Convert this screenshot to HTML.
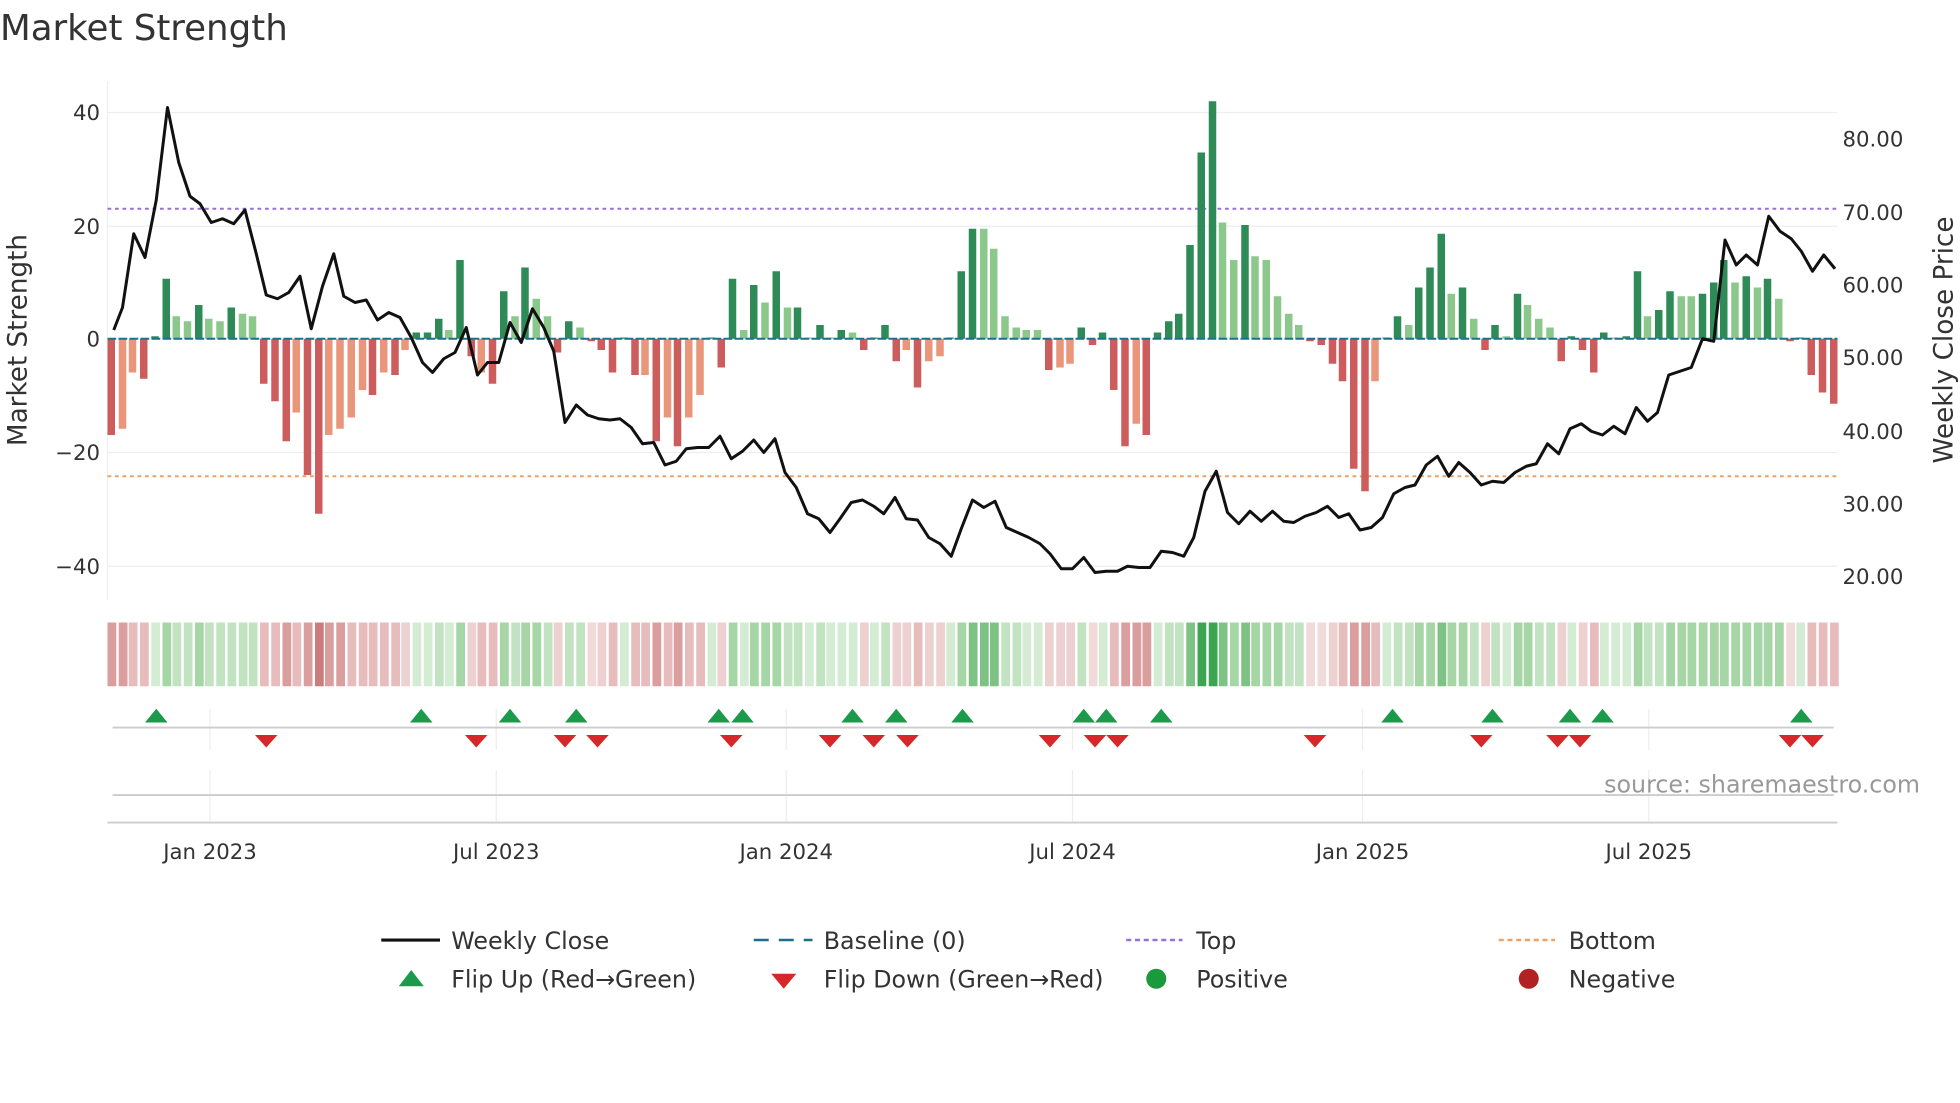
<!DOCTYPE html>
<html><head><meta charset="utf-8"><style>
html,body{margin:0;padding:0;background:#fff;overflow:hidden;}
#w{position:absolute;left:0;top:0;width:1568px;height:882px;transform:scale(1.25);transform-origin:0 0;}
svg{position:absolute;left:0;top:0;display:block;font-family:"DejaVu Sans","Liberation Sans",sans-serif;}
.bars{position:absolute;left:86px;top:71px;width:1384px;height:400px;display:flex;justify-content:space-between;}
.bars i{position:relative;width:6px;height:100%;display:block;}
.bars i::after{content:"";position:absolute;left:0;width:6px;height:calc(var(--v)*4.53px);}
.D::after,.L::after{bottom:200px;}
.R::after,.S::after{top:200px;}
.D::after{background:#2e8b57;}.L::after{background:#8cc88c;}
.R::after{background:#cd5c5c;}.S::after{background:#e9967a;}
.heat{position:absolute;left:86px;top:498px;width:1386px;height:51px;display:flex;justify-content:space-between;}
.heat i{display:block;width:7px;height:100%;}
.g1{background:#d4ecd4}.g2{background:#c2e3c2}.g3{background:#a6d6a6}.g4{background:#7fc285}.g5{background:#3da552}
.r1{background:#f0dada}.r2{background:#edd0d0}.r3{background:#e6bcbc}.r4{background:#db9e9e}.r5{background:#cc7c7c}
</style></head><body>
<div id="w">
<svg width="1568" height="882" viewBox="0 0 1568 882">
<rect width="1568" height="882" fill="#fff"/>
<g stroke="#eee" stroke-width="1">
<line x1="86" y1="90" x2="1470" y2="90"/><line x1="86" y1="181" x2="1470" y2="181"/>
<line x1="86" y1="362" x2="1470" y2="362"/><line x1="86" y1="453" x2="1470" y2="453"/>
<line x1="86" y1="65" x2="86" y2="480"/>
<line x1="168" y1="567" x2="168" y2="600"/><line x1="397" y1="567" x2="397" y2="600"/><line x1="629" y1="567" x2="629" y2="600"/><line x1="858" y1="567" x2="858" y2="600"/><line x1="1090" y1="567" x2="1090" y2="600"/><line x1="1319" y1="567" x2="1319" y2="600"/>
<line x1="168" y1="616" x2="168" y2="658"/><line x1="397" y1="616" x2="397" y2="658"/><line x1="629" y1="616" x2="629" y2="658"/><line x1="858" y1="616" x2="858" y2="658"/><line x1="1090" y1="616" x2="1090" y2="658"/><line x1="1319" y1="616" x2="1319" y2="658"/>
</g>
<line x1="86" y1="167" x2="1470" y2="167" stroke="#9b6fd9" stroke-width="1.6" stroke-dasharray="3,3"/>
<line x1="86" y1="381" x2="1470" y2="381" stroke="#f0a060" stroke-width="1.6" stroke-dasharray="3,3"/>
<g stroke="#ccc" stroke-width="1.5">
<line x1="90" y1="582" x2="1467" y2="582"/><line x1="90" y1="636" x2="1467" y2="636"/><line x1="86" y1="658" x2="1470" y2="658"/>
</g>
</svg>
<div class="bars">
<i class="R" style="--v:17"></i><i class="S" style="--v:16"></i><i class="S" style="--v:6"></i><i class="R" style="--v:7"></i><i class="D" style="--v:.5"></i><i class="D" style="--v:10.5"></i><i class="L" style="--v:4"></i><i class="L" style="--v:3"></i><i class="D" style="--v:6"></i><i class="L" style="--v:3.5"></i>
<i class="L" style="--v:3"></i><i class="D" style="--v:5.5"></i><i class="L" style="--v:4.5"></i><i class="L" style="--v:4"></i><i class="R" style="--v:8"></i><i class="R" style="--v:11"></i><i class="R" style="--v:18"></i><i class="S" style="--v:13"></i><i class="R" style="--v:24"></i><i class="R" style="--v:31"></i>
<i class="S" style="--v:17"></i><i class="S" style="--v:16"></i><i class="S" style="--v:14"></i><i class="S" style="--v:9"></i><i class="R" style="--v:10"></i><i class="S" style="--v:6"></i><i class="R" style="--v:6.5"></i><i class="S" style="--v:2"></i><i class="D" style="--v:1"></i><i class="D" style="--v:1"></i>
<i class="D" style="--v:3.5"></i><i class="L" style="--v:1.5"></i><i class="D" style="--v:14"></i><i class="R" style="--v:3"></i><i class="S" style="--v:6"></i><i class="R" style="--v:8"></i><i class="D" style="--v:8.5"></i><i class="L" style="--v:4"></i><i class="D" style="--v:12.5"></i><i class="L" style="--v:7"></i>
<i class="L" style="--v:4"></i><i class="R" style="--v:2.5"></i><i class="D" style="--v:3"></i><i class="L" style="--v:2"></i><i class="R" style="--v:.5"></i><i class="R" style="--v:2"></i><i class="R" style="--v:6"></i><i class="D" style="--v:.3"></i><i class="R" style="--v:6.5"></i><i class="S" style="--v:6.5"></i>
<i class="R" style="--v:18"></i><i class="S" style="--v:14"></i><i class="R" style="--v:19"></i><i class="S" style="--v:14"></i><i class="S" style="--v:10"></i><i class="D" style="--v:.3"></i><i class="R" style="--v:5"></i><i class="D" style="--v:10.5"></i><i class="L" style="--v:1.5"></i><i class="D" style="--v:9.5"></i>
<i class="L" style="--v:6.5"></i><i class="D" style="--v:12"></i><i class="L" style="--v:5.5"></i><i class="D" style="--v:5.5"></i><i class="L" style="--v:.3"></i><i class="D" style="--v:2.5"></i><i class="L" style="--v:.3"></i><i class="D" style="--v:1.5"></i><i class="L" style="--v:1"></i><i class="R" style="--v:2"></i>
<i class="D" style="--v:.3"></i><i class="D" style="--v:2.5"></i><i class="R" style="--v:4"></i><i class="S" style="--v:2"></i><i class="R" style="--v:8.5"></i><i class="S" style="--v:4"></i><i class="S" style="--v:3"></i><i class="D" style="--v:.3"></i><i class="D" style="--v:12"></i><i class="D" style="--v:19.5"></i>
<i class="L" style="--v:19.5"></i><i class="L" style="--v:16"></i><i class="L" style="--v:4"></i><i class="L" style="--v:2"></i><i class="L" style="--v:1.5"></i><i class="L" style="--v:1.5"></i><i class="R" style="--v:5.5"></i><i class="S" style="--v:5"></i><i class="S" style="--v:4.5"></i><i class="D" style="--v:2"></i>
<i class="R" style="--v:1"></i><i class="D" style="--v:1"></i><i class="R" style="--v:9"></i><i class="R" style="--v:19"></i><i class="S" style="--v:15"></i><i class="R" style="--v:17"></i><i class="D" style="--v:1"></i><i class="D" style="--v:3"></i><i class="D" style="--v:4.5"></i><i class="D" style="--v:16.5"></i>
<i class="D" style="--v:33"></i><i class="D" style="--v:42"></i><i class="L" style="--v:20.5"></i><i class="L" style="--v:14"></i><i class="D" style="--v:20"></i><i class="L" style="--v:14.5"></i><i class="L" style="--v:14"></i><i class="L" style="--v:7.5"></i><i class="L" style="--v:4.5"></i><i class="L" style="--v:2.5"></i>
<i class="R" style="--v:.5"></i><i class="R" style="--v:1"></i><i class="R" style="--v:4.5"></i><i class="R" style="--v:7.5"></i><i class="R" style="--v:23"></i><i class="R" style="--v:27"></i><i class="S" style="--v:7.5"></i><i class="D" style="--v:.3"></i><i class="D" style="--v:4"></i><i class="L" style="--v:2.5"></i>
<i class="D" style="--v:9"></i><i class="D" style="--v:12.5"></i><i class="D" style="--v:18.5"></i><i class="L" style="--v:8"></i><i class="D" style="--v:9"></i><i class="L" style="--v:3.5"></i><i class="R" style="--v:2"></i><i class="D" style="--v:2.5"></i><i class="L" style="--v:.5"></i><i class="D" style="--v:8"></i>
<i class="L" style="--v:6"></i><i class="L" style="--v:3.5"></i><i class="L" style="--v:2"></i><i class="R" style="--v:4"></i><i class="D" style="--v:.5"></i><i class="R" style="--v:2"></i><i class="R" style="--v:6"></i><i class="D" style="--v:1"></i><i class="L" style="--v:.3"></i><i class="D" style="--v:.5"></i>
<i class="D" style="--v:12"></i><i class="L" style="--v:4"></i><i class="D" style="--v:5"></i><i class="D" style="--v:8.5"></i><i class="L" style="--v:7.5"></i><i class="L" style="--v:7.5"></i><i class="D" style="--v:8"></i><i class="D" style="--v:10"></i><i class="D" style="--v:14"></i><i class="L" style="--v:10"></i>
<i class="D" style="--v:11"></i><i class="L" style="--v:9"></i><i class="D" style="--v:10.5"></i><i class="L" style="--v:7"></i><i class="R" style="--v:.5"></i><i class="D" style="--v:.3"></i><i class="R" style="--v:6.5"></i><i class="R" style="--v:9.5"></i><i class="R" style="--v:11.5"></i>
</div>
<div class="heat">
<i class="r4"></i><i class="r4"></i><i class="r3"></i><i class="r3"></i><i class="g1"></i><i class="g3"></i><i class="g2"></i><i class="g2"></i><i class="g3"></i><i class="g2"></i>
<i class="g2"></i><i class="g2"></i><i class="g2"></i><i class="g2"></i><i class="r3"></i><i class="r3"></i><i class="r4"></i><i class="r3"></i><i class="r4"></i><i class="r5"></i>
<i class="r4"></i><i class="r4"></i><i class="r3"></i><i class="r3"></i><i class="r3"></i><i class="r3"></i><i class="r3"></i><i class="r2"></i><i class="g1"></i><i class="g1"></i>
<i class="g2"></i><i class="g1"></i><i class="g3"></i><i class="r2"></i><i class="r3"></i><i class="r3"></i><i class="g3"></i><i class="g2"></i><i class="g3"></i><i class="g3"></i>
<i class="g2"></i><i class="r2"></i><i class="g2"></i><i class="g2"></i><i class="r1"></i><i class="r2"></i><i class="r3"></i><i class="g1"></i><i class="r3"></i><i class="r3"></i>
<i class="r4"></i><i class="r3"></i><i class="r4"></i><i class="r3"></i><i class="r3"></i><i class="g1"></i><i class="r2"></i><i class="g3"></i><i class="g1"></i><i class="g3"></i>
<i class="g3"></i><i class="g3"></i><i class="g2"></i><i class="g2"></i><i class="g1"></i><i class="g2"></i><i class="g1"></i><i class="g1"></i><i class="g1"></i><i class="r2"></i>
<i class="g1"></i><i class="g2"></i><i class="r2"></i><i class="r2"></i><i class="r3"></i><i class="r2"></i><i class="r2"></i><i class="g1"></i><i class="g3"></i><i class="g4"></i>
<i class="g4"></i><i class="g4"></i><i class="g2"></i><i class="g2"></i><i class="g1"></i><i class="g1"></i><i class="r2"></i><i class="r2"></i><i class="r2"></i><i class="g2"></i>
<i class="r1"></i><i class="g1"></i><i class="r3"></i><i class="r4"></i><i class="r4"></i><i class="r4"></i><i class="g1"></i><i class="g2"></i><i class="g2"></i><i class="g4"></i>
<i class="g5"></i><i class="g5"></i><i class="g4"></i><i class="g3"></i><i class="g4"></i><i class="g3"></i><i class="g3"></i><i class="g3"></i><i class="g2"></i><i class="g2"></i>
<i class="r1"></i><i class="r1"></i><i class="r2"></i><i class="r3"></i><i class="r4"></i><i class="r4"></i><i class="r3"></i><i class="g1"></i><i class="g2"></i><i class="g2"></i>
<i class="g3"></i><i class="g3"></i><i class="g4"></i><i class="g3"></i><i class="g3"></i><i class="g2"></i><i class="r2"></i><i class="g2"></i><i class="g1"></i><i class="g3"></i>
<i class="g3"></i><i class="g2"></i><i class="g2"></i><i class="r2"></i><i class="g1"></i><i class="r2"></i><i class="r3"></i><i class="g1"></i><i class="g1"></i><i class="g1"></i>
<i class="g3"></i><i class="g2"></i><i class="g2"></i><i class="g3"></i><i class="g3"></i><i class="g3"></i><i class="g3"></i><i class="g3"></i><i class="g3"></i><i class="g3"></i>
<i class="g3"></i><i class="g3"></i><i class="g3"></i><i class="g3"></i><i class="r1"></i><i class="g1"></i><i class="r3"></i><i class="r3"></i><i class="r3"></i>
</div>
<svg width="1568" height="882" viewBox="0 0 1568 882">
<defs>
<polygon id="up" points="-9,578 0,567 9,578" fill="#1a9a4a"/>
<polygon id="dn" points="-9,588 0,598 9,588" fill="#d62828"/>
</defs>
<line x1="86" y1="271" x2="1470" y2="271" stroke="#1f6f8b" stroke-width="1.6" stroke-dasharray="7,1.8"/>
<polyline fill="none" stroke="#111" stroke-width="2.4" stroke-linejoin="round" points="91,264 98,246 107,187 116,206 125,160 134,86 143,130 152,157 160,163 169,178 178,175 187,179 196,168 205,203 213,236 222,239 231,234 240,221 249,263 258,229 267,203 275,237 284,242 293,240 302,256 311,250 320,254 329,270 338,290 346,298 355,287 364,282 373,262 382,300 390,290 399,290 408,258 417,274 426,247 435,262 443,281 452,338 461,324 470,332 479,335 488,336 496,335 505,342 514,355 523,354 532,372 541,369 549,359 558,358 567,358 576,349 585,367 594,361 603,352 611,362 620,351 628,378 637,390 646,411 655,415 664,426 672,415 681,402 690,400 699,405 707,411 716,398 725,415 734,416 743,430 752,435 761,445 769,423 778,400 787,406 796,401 805,422 814,426 823,430 832,435 840,443 849,455 858,455 867,446 876,458 885,457 894,457 902,453 911,454 920,454 929,441 938,442 947,445 955,430 964,393 973,377 982,410 991,419 1000,409 1009,417 1018,409 1027,417 1035,418 1044,413 1053,410 1062,405 1071,414 1079,411 1088,424 1097,422 1106,414 1115,395 1124,390 1132,388 1141,372 1150,365 1159,381 1167,370 1176,378 1185,388 1194,385 1203,386 1212,378 1221,373 1229,371 1238,355 1247,363 1256,343 1265,339 1273,345 1282,348 1291,341 1300,347 1309,326 1318,337 1326,330 1335,300 1344,297 1353,294 1362,271 1371,273 1380,192 1389,212 1397,204 1406,212 1415,173 1424,185 1433,191 1441,201 1450,217 1459,204 1468,215"/>
<use href="#up" x="125"/><use href="#up" x="337"/><use href="#up" x="408"/><use href="#up" x="461"/><use href="#up" x="575"/><use href="#up" x="594"/><use href="#up" x="682"/><use href="#up" x="717"/><use href="#up" x="770"/><use href="#up" x="867"/><use href="#up" x="885"/><use href="#up" x="929"/><use href="#up" x="1114"/><use href="#up" x="1194"/><use href="#up" x="1256"/><use href="#up" x="1282"/><use href="#up" x="1441"/>
<use href="#dn" x="213"/><use href="#dn" x="381"/><use href="#dn" x="452"/><use href="#dn" x="478"/><use href="#dn" x="585"/><use href="#dn" x="664"/><use href="#dn" x="699"/><use href="#dn" x="726"/><use href="#dn" x="840"/><use href="#dn" x="876"/><use href="#dn" x="894"/><use href="#dn" x="1052"/><use href="#dn" x="1185"/><use href="#dn" x="1246"/><use href="#dn" x="1264"/><use href="#dn" x="1432"/><use href="#dn" x="1450"/>
<text x="0" y="32" font-size="28.5" fill="#333">Market Strength</text>
<g font-size="17" fill="#333" text-anchor="end">
<text x="80" y="96">40</text><text x="80" y="187">20</text><text x="80" y="277">0</text>
<text x="80" y="368">−20</text><text x="80" y="459">−40</text>
</g>
<g font-size="17" fill="#333">
<text x="1474" y="117">80.00</text><text x="1474" y="176">70.00</text><text x="1474" y="234">60.00</text>
<text x="1474" y="292">50.00</text><text x="1474" y="351">40.00</text><text x="1474" y="409">30.00</text><text x="1474" y="467">20.00</text>
</g>
<text transform="translate(21,272) rotate(-90)" font-size="21" fill="#333" text-anchor="middle">Market Strength</text>
<text transform="translate(1562,272) rotate(-90)" font-size="21" fill="#333" text-anchor="middle">Weekly Close Price</text>
<g font-size="17" fill="#333" text-anchor="middle">
<text x="168" y="687">Jan 2023</text><text x="397" y="687">Jul 2023</text><text x="629" y="687">Jan 2024</text>
<text x="858" y="687">Jul 2024</text><text x="1090" y="687">Jan 2025</text><text x="1319" y="687">Jul 2025</text>
</g>
<text x="1536" y="634" font-size="19" fill="#999" text-anchor="end">source: sharemaestro.com</text>
<g font-size="19" fill="#333">
<line x1="305" y1="752" x2="352" y2="752" stroke="#111" stroke-width="2.5"/><text x="361" y="759">Weekly Close</text>
<line x1="603" y1="752" x2="650" y2="752" stroke="#1f6f8b" stroke-width="2" stroke-dasharray="12,8"/><text x="659" y="759">Baseline (0)</text>
<line x1="901" y1="752" x2="946" y2="752" stroke="#9b6fd9" stroke-width="2" stroke-dasharray="4,3"/><text x="957" y="759">Top</text>
<line x1="1199" y1="752" x2="1244" y2="752" stroke="#f0a060" stroke-width="2" stroke-dasharray="4,3"/><text x="1255" y="759">Bottom</text>
<polygon points="319,789 329,776 339,789" fill="#1a9a4a"/><text x="361" y="790">Flip Up (Red→Green)</text>
<polygon points="617,779 627,791 637,779" fill="#d62828"/><text x="659" y="790">Flip Down (Green→Red)</text>
<circle cx="925" cy="783" r="8" fill="#1a9a3a"/><text x="957" y="790">Positive</text>
<circle cx="1223" cy="783" r="8" fill="#b22222"/><text x="1255" y="790">Negative</text>
</g>
</svg>
</div>
</body></html>
